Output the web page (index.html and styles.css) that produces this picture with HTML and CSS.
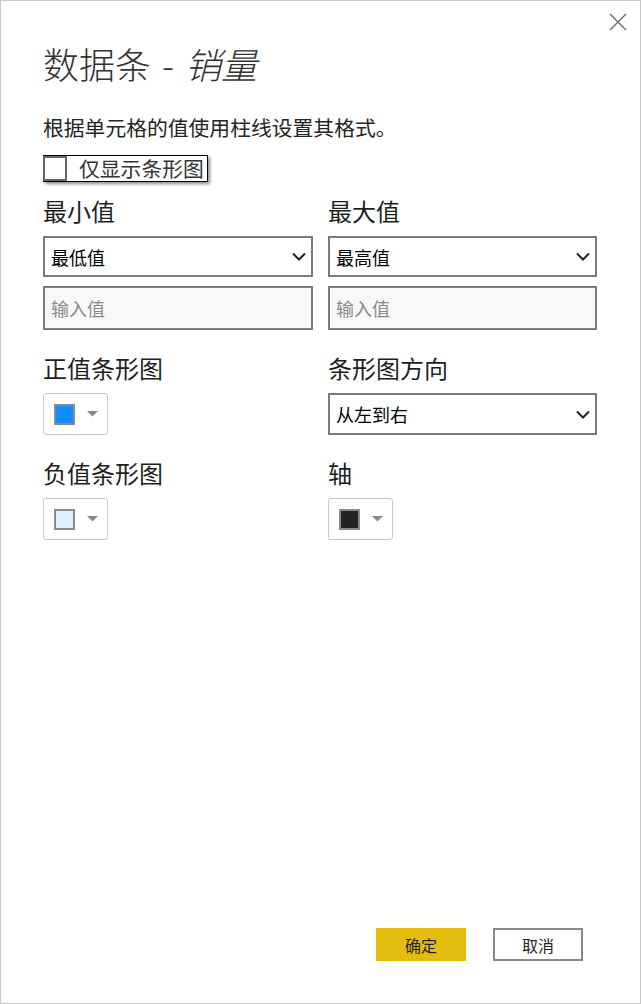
FILE: index.html
```html
<!DOCTYPE html>
<html lang="zh-CN">
<head>
<meta charset="utf-8">
<title>数据条 - 销量</title>
<link rel="stylesheet" href="styles.css">
</head>
<body>
<div class="dialog">
  <div class="topbar">
    <button class="close" aria-label="关闭">
      <svg width="18" height="18" viewBox="0 0 18 18"><path d="M1 1 L17 17 M17 1 L1 17" stroke="#6b6b6b" stroke-width="1.4" fill="none"/></svg>
    </button>
  </div>
  <h1 class="title">数据条 - <em>销量</em></h1>
  <p class="desc">根据单元格的值使用柱线设置其格式。</p>
  <label class="check-row"><span class="checkbox"></span><span class="check-label">仅显示条形图</span></label>
  <div class="fields">
    <div class="field">
      <div class="field-label">最小值</div>
      <div class="select"><span>最低值</span><svg class="chev" width="14" height="9" viewBox="0 0 14 9"><path d="M1 1.5 L7 7.5 L13 1.5" stroke="#222" stroke-width="2" fill="none"/></svg></div>
      <input class="text-input" placeholder="输入值">
    </div>
    <div class="field">
      <div class="field-label">最大值</div>
      <div class="select"><span>最高值</span><svg class="chev" width="14" height="9" viewBox="0 0 14 9"><path d="M1 1.5 L7 7.5 L13 1.5" stroke="#222" stroke-width="2" fill="none"/></svg></div>
      <input class="text-input" placeholder="输入值">
    </div>
    <div class="field">
      <div class="field-label">正值条形图</div>
      <button class="color-btn"><span class="swatch swatch-blue"></span><svg width="11" height="6" viewBox="0 0 11 6"><path d="M0 0 L11 0 L5.5 5.5 Z" fill="#8a8a8a"/></svg></button>
    </div>
    <div class="field">
      <div class="field-label">条形图方向</div>
      <div class="select select-tall"><span>从左到右</span><svg class="chev" width="14" height="9" viewBox="0 0 14 9"><path d="M1 1.5 L7 7.5 L13 1.5" stroke="#222" stroke-width="2" fill="none"/></svg></div>
    </div>
    <div class="field">
      <div class="field-label">负值条形图</div>
      <button class="color-btn"><span class="swatch swatch-light"></span><svg width="11" height="6" viewBox="0 0 11 6"><path d="M0 0 L11 0 L5.5 5.5 Z" fill="#8a8a8a"/></svg></button>
    </div>
    <div class="field">
      <div class="field-label">轴</div>
      <button class="color-btn"><span class="swatch swatch-dark"></span><svg width="11" height="6" viewBox="0 0 11 6"><path d="M0 0 L11 0 L5.5 5.5 Z" fill="#8a8a8a"/></svg></button>
    </div>
  </div>
  <div class="footer">
    <button class="btn btn-primary">确定</button>
    <button class="btn btn-secondary">取消</button>
  </div>
</div>
</body>
</html>
```

FILE: styles.css
```css
html, body {
  margin: 0;
  padding: 0;
  background: #fff;
}

body {
  font-family: "Noto Sans CJK SC", "Noto Sans", sans-serif;
  color: #252423;
}

.dialog {
  box-sizing: border-box;
  width: 641px;
  height: 1004px;
  border: 1px solid #c8c8c8;
  padding-left: 42px;
  display: flex;
  flex-direction: column;
}

.topbar {
  display: flex;
  justify-content: flex-end;
  height: 30px;
  padding-right: 13px;
}

.close {
  margin-top: 12px;
  width: 18px;
  height: 18px;
  padding: 0;
  border: 0;
  background: none;
  display: block;
}

.close svg {
  display: block;
}

.title {
  margin: 11px 0 0;
  font-size: 36px;
  line-height: 42px;
  font-weight: 300;
  word-spacing: 3px;
  color: #333;
}

.title em {
  font-style: italic;
}

.desc {
  margin: 29px 0 0;
  font-size: 20.8px;
  line-height: 28px;
  color: #252423;
}

.check-row {
  margin-top: 14px;
  align-self: flex-start;
  display: flex;
  align-items: center;
  gap: 12px;
  height: 27px;
  box-sizing: border-box;
  border: 1px solid #000;
  box-shadow: 2px 2px 3px rgba(0, 0, 0, 0.45);
  padding-right: 3px;
}

.checkbox {
  width: 24px;
  height: 25px;
  margin-left: -1px;
  box-sizing: border-box;
  border: 2px solid #666;
  background: #fff;
}

.check-label {
  font-size: 20.8px;
  line-height: 25px;
  color: #333;
}

.fields {
  margin-top: 14px;
  display: grid;
  grid-template-columns: 270px 269px;
  column-gap: 15px;
  row-gap: 23px;
}

.field {
  display: flex;
  flex-direction: column;
  align-items: flex-start;
}

.field-label {
  font-size: 24px;
  line-height: 30px;
  margin-bottom: 10px;
  color: #201f1e;
}

.select {
  box-sizing: border-box;
  width: 100%;
  height: 41px;
  border: 2px solid #7a7a7a;
  background: #fff;
  display: flex;
  align-items: center;
  justify-content: space-between;
  padding: 0 5px 0 6px;
  font-size: 18px;
  color: #000;
}

.select-tall {
  height: 42px;
}

.chev {
  display: block;
}

.text-input {
  box-sizing: border-box;
  width: 100%;
  height: 44px;
  margin: 9px 0 0;
  border: 2px solid #7a7a7a;
  background: #f8f8f8;
  padding: 0 6px;
  font-family: "Noto Sans CJK SC", "Noto Sans", sans-serif;
  font-size: 18px;
  color: #000;
  outline: none;
}

.text-input::placeholder {
  color: #8a8a8a;
}

.color-btn {
  box-sizing: border-box;
  width: 65px;
  height: 42px;
  border: 1px solid #c8c8c8;
  border-radius: 3px;
  background: #fff;
  display: flex;
  align-items: center;
  padding: 0 0 0 10px;
  gap: 12px;
}

.color-btn svg {
  display: block;
}

.swatch {
  width: 21px;
  height: 21px;
  box-sizing: border-box;
  border: 2px solid #8a8a8a;
}

.swatch-blue {
  background: #118dff;
}

.swatch-light {
  background: #deefff;
}

.swatch-dark {
  background: #252423;
}

.footer {
  margin-top: auto;
  display: flex;
  justify-content: flex-end;
  gap: 27px;
  padding-right: 57px;
  padding-bottom: 42px;
}

.btn {
  box-sizing: border-box;
  width: 90px;
  height: 33px;
  padding: 0;
  font-family: "Noto Sans CJK SC", "Noto Sans", sans-serif;
  font-size: 16px;
  color: #252423;
}

.btn-primary {
  background: #e3bc10;
  border: 0;
}

.btn-secondary {
  background: #fff;
  border: 2px solid #8a8a8a;
}
```
